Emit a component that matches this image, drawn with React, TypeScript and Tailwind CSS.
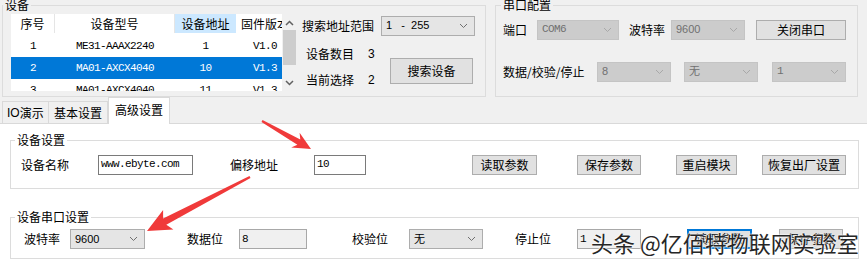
import type { ReactNode } from 'react'

const mono = "font-['Liberation_Mono','Noto_Sans_CJK_SC',monospace] text-[11px] tracking-[-0.6px]"
const latin = "font-['Liberation_Sans','Noto_Sans_CJK_SC',sans-serif] text-[11px]"

function Chevron({ color = '#606060' }: { color?: string }) {
  return (
    <svg width="9" height="6" viewBox="0 0 9 6" className="shrink-0">
      <path d="M1 1 L4.5 4.5 L8 1" fill="none" stroke={color} strokeWidth="1" />
    </svg>
  )
}

function Combo({ text, w, disabled, monoText }: { text: string; w: string; disabled?: boolean; monoText?: boolean }) {
  return (
    <div
      className={`flex h-[20px] shrink-0 items-center justify-between border pl-[4px] pr-[6px] ${w} ${
        disabled ? 'border-[#c4c4c4] bg-[#cccccc] text-[#707070]' : 'border-[#adadad] bg-[#e5e5e5] text-black'
      }`}
    >
      <span className={`whitespace-pre ${monoText ? mono : latin}`}>{text}</span>
      <Chevron color={disabled ? '#a8a8a8' : '#707070'} />
    </div>
  )
}

function Btn({ children, w, focused, h = 'h-[20px]' }: { children: ReactNode; w: string; focused?: boolean; h?: string }) {
  return (
    <div
      className={`flex shrink-0 items-center justify-center bg-[#e1e1e1] ${h} ${w} ${
        focused ? 'border-2 border-[#0078d7]' : 'border border-[#adadad]'
      }`}
    >
      {children}
    </div>
  )
}

function Field({ text, w, disabled }: { text: string; w: string; disabled?: boolean }) {
  return (
    <div
      className={`flex h-[20px] shrink-0 items-center border px-[2px] ${mono} ${w} ${
        disabled ? 'border-[#a8a8a8] bg-[#f0f0f0]' : 'border-[#7a7a7a] bg-white'
      }`}
    >
      {text}
    </div>
  )
}

function Label({ children, w, className = '' }: { children: ReactNode; w: string; className?: string }) {
  return <span className={`shrink-0 whitespace-nowrap ${w} ${className}`}>{children}</span>
}

const rows = [
  ['1', 'ME31-AAAX2240', '1', 'V1.0'],
  ['2', 'MA01-AXCX4040', '10', 'V1.3'],
  ['3', 'MA01-AXCX4040', '11', 'V1.3'],
]

function DeviceList() {
  return (
    <div className="ml-[8px] mt-[1px] flex h-[77px] w-[286px] bg-white">
      <div className="w-[271px] overflow-hidden">
        <div className="flex h-[19px] items-center">
          <div className="flex h-full w-[44px] items-center justify-center border-r border-[#e5e5e5]">序号</div>
          <div className="flex h-full w-[120px] items-center justify-center border-r border-[#e5e5e5]">设备型号</div>
          <div className="flex h-full w-[61px] items-center justify-center bg-[#cce8ff]">设备地址</div>
          <div className="flex h-full w-[46px] items-center overflow-hidden whitespace-nowrap pl-[5px]">固件版本</div>
        </div>
        <div className="mt-[2px]">
          {rows.map((r, i) => (
            <div key={i} className={`flex h-[22px] items-center ${mono} ${i === 1 ? 'bg-[#0078d7] text-white' : 'text-black'}`}>
              <span className="w-[44px] text-center">{r[0]}</span>
              <span className="w-[120px] text-center">{r[1]}</span>
              <span className="w-[61px] text-center">{r[2]}</span>
              <span className="w-[46px] pl-[17px]">{r[3]}</span>
            </div>
          ))}
        </div>
      </div>
      <div className="flex w-[15px] flex-col items-center bg-[#f0f0f0]">
        <svg width="9" height="6" viewBox="0 0 9 6" className="mt-[6px]">
          <path d="M1 5 L4.5 1.5 L8 5" fill="none" stroke="#606060" strokeWidth="1.5" />
        </svg>
        <div className="mt-[4px] h-[35px] w-[13px] bg-[#cdcdcd]" />
        <svg width="9" height="6" viewBox="0 0 9 6" className="mt-[15px]">
          <path d="M1 1 L4.5 4.5 L8 1" fill="none" stroke="#606060" strokeWidth="1.5" />
        </svg>
      </div>
    </div>
  )
}

function arrow(tx: number, ty: number, px: number, py: number, tailW: number, neckW: number, headL: number, headW: number) {
  const dx = px - tx
  const dy = py - ty
  const len = Math.hypot(dx, dy)
  const ux = dx / len
  const uy = dy / len
  const nx = -uy
  const ny = ux
  const bx = px - ux * headL
  const by = py - uy * headL
  const cx = px - ux * (headL - 4)
  const cy = py - uy * (headL - 4)
  const pts = [
    [tx + (nx * tailW) / 2, ty + (ny * tailW) / 2],
    [cx + (nx * neckW) / 2, cy + (ny * neckW) / 2],
    [bx + (nx * headW) / 2, by + (ny * headW) / 2],
    [px, py],
    [bx - (nx * headW) / 2, by - (ny * headW) / 2],
    [cx - (nx * neckW) / 2, cy - (ny * neckW) / 2],
    [tx - (nx * tailW) / 2, ty - (ny * tailW) / 2],
  ]
  return pts.map((p) => p.map((v) => v.toFixed(1)).join(',')).join(' ')
}

export default function App() {
  return (
    <div className="relative h-[267px] w-[867px] overflow-hidden bg-[#f0f0f0] font-['Noto_Sans_CJK_SC','Microsoft_YaHei',sans-serif] text-[12px] leading-none text-black">
      {/* top: device list + serial config */}
      <div className="mt-[-3px] flex h-[100px]">
        <fieldset className="ml-[2px] h-[100px] w-[484px] border border-[#dcdcdc]">
          <legend className="h-[16px] px-[2px] leading-[16px]">设备</legend>
          <div className="flex">
            <DeviceList />
            <div className="ml-[5px] flex flex-col">
              <div className="mt-[3px] flex h-[19px] items-center">
                <Label w="w-[79px]">搜索地址范围</Label>
                <Combo text="1   -  255" w="w-[94px]" />
              </div>
              <div className="mt-[11px] flex">
                <div className="ml-[4px] flex w-[84px] flex-col">
                  <div className="flex h-[16px] items-center">
                    <Label w="w-[62px]">设备数目</Label>
                    <span className={latin + ' text-[12px]'}>3</span>
                  </div>
                  <div className="mt-[10px] flex h-[16px] items-center">
                    <Label w="w-[62px]">当前选择</Label>
                    <span className={latin + ' text-[12px]'}>2</span>
                  </div>
                </div>
                <div className="mt-[12px]">
                  <Btn w="w-[83px]" h="h-[26px]">
                    搜索设备
                  </Btn>
                </div>
              </div>
            </div>
          </div>
        </fieldset>

        <fieldset className="ml-[9px] h-[100px] w-[363px] border border-[#dcdcdc]">
          <legend className="ml-[5px] h-[16px] px-[2px] leading-[16px]">串口配置</legend>
          <div className="ml-[7px] mt-[6px] flex h-[21px] items-center">
            <Label w="w-[34px]">端口</Label>
            <Combo text="COM6" w="w-[82px]" disabled monoText />
            <Label w="w-[42px]" className="ml-[10px]">
              波特率
            </Label>
            <Combo text="9600" w="w-[74px]" disabled />
            <div className="ml-[11px]">
              <Btn w="w-[90px]">关闭串口</Btn>
            </div>
          </div>
          <div className="ml-[7px] mt-[21px] flex h-[21px] items-center">
            <Label w="w-[94px]">数据/校验/停止</Label>
            <Combo text="8" w="w-[74px]" disabled />
            <div className="ml-[13px]">
              <Combo text="无" w="w-[74px]" disabled />
            </div>
            <div className="ml-[14px]">
              <Combo text="1" w="w-[74px]" disabled monoText />
            </div>
          </div>
        </fieldset>
      </div>

      {/* tabs */}
      <div className="flex h-[26px] items-end">
        <div className="ml-[2px] flex h-[22px] w-[47px] items-center border border-b-0 border-[#d9d9d9] pl-[4px] pt-[1px]">
          <span className="font-['Liberation_Sans','Noto_Sans_CJK_SC',sans-serif]">IO</span>演示
        </div>
        <div className="flex h-[22px] w-[59px] items-center justify-center border border-b-0 border-l-0 border-[#d9d9d9] pt-[1px]">
          基本设置
        </div>
        <div className="relative z-10 mb-[-1px] flex h-[27px] w-[62px] items-center justify-center border border-b-0 border-[#d9d9d9] bg-white pb-[3px]">
          高级设置
        </div>
      </div>

      {/* tab panel */}
      <div className="h-[200px] border-t border-[#d9d9d9] bg-white">
        <fieldset className="ml-[10px] mt-[8px] h-[57px] w-[849px] border border-[#dcdcdc]">
          <legend className="ml-[4px] h-[16px] px-[2px] leading-[16px]">设备设置</legend>
          <div className="mt-[6px] flex h-[21px] items-center">
            <Label w="w-[48px]" className="ml-[10px]">
              设备名称
            </Label>
            <div className="ml-[29px]">
              <Field text="www.ebyte.com" w="w-[95px]" />
            </div>
            <Label w="w-[48px]" className="ml-[37px]">
              偏移地址
            </Label>
            <div className="ml-[36px]">
              <Field text="10" w="w-[52px]" />
            </div>
            <div className="ml-[106px]">
              <Btn w="w-[65px]">读取参数</Btn>
            </div>
            <div className="ml-[40px]">
              <Btn w="w-[64px]">保存参数</Btn>
            </div>
            <div className="ml-[35px]">
              <Btn w="w-[61px]">重启模块</Btn>
            </div>
            <div className="ml-[25px]">
              <Btn w="w-[84px]">恢复出厂设置</Btn>
            </div>
          </div>
        </fieldset>

        <fieldset className="ml-[10px] mt-[20px] h-[50px] w-[849px] border border-[#dcdcdc]">
          <legend className="ml-[4px] h-[16px] px-[2px] leading-[16px]">设备串口设置</legend>
          <div className="mt-[4px] flex h-[20px] items-center">
            <Label w="w-[36px]" className="ml-[13px]">
              波特率
            </Label>
            <div className="ml-[10px]">
              <Combo text="9600" w="w-[75px]" />
            </div>
            <Label w="w-[36px]" className="ml-[42px]">
              数据位
            </Label>
            <div className="ml-[16px]">
              <Field text="8" w="w-[68px]" disabled />
            </div>
            <Label w="w-[36px]" className="ml-[45px]">
              校验位
            </Label>
            <div className="ml-[21px]">
              <Combo text="无" w="w-[74px]" />
            </div>
            <Label w="w-[36px]" className="ml-[32px]">
              停止位
            </Label>
            <div className="ml-[26px]">
              <Field text="1" w="w-[64px]" disabled />
            </div>
            <div className="ml-[46px]">
              <Btn w="w-[65px]" focused>
                读取参数
              </Btn>
            </div>
            <div className="ml-[27px]">
              <Btn w="w-[64px]">保存参数</Btn>
            </div>
          </div>
        </fieldset>
      </div>

      {/* annotation arrows */}
      <svg className="pointer-events-none absolute left-0 top-0" width="867" height="267">
        <polygon points={arrow(262, 121, 311, 149, 2, 6, 18, 17)} fill="#f03a3a" />
        <polygon points={arrow(250, 177, 147, 231, 2, 7, 24, 22)} fill="#f03a3a" />
      </svg>

      {/* watermark */}
      <div className="pointer-events-none absolute left-[591px] top-[231px] whitespace-nowrap text-[22px] leading-none text-[#262626] [text-shadow:0_0_2px_#fff,0_0_2px_#fff,0_0_1px_#fff]">
        头条 @亿佰特物联网实验室
      </div>
    </div>
  )
}
